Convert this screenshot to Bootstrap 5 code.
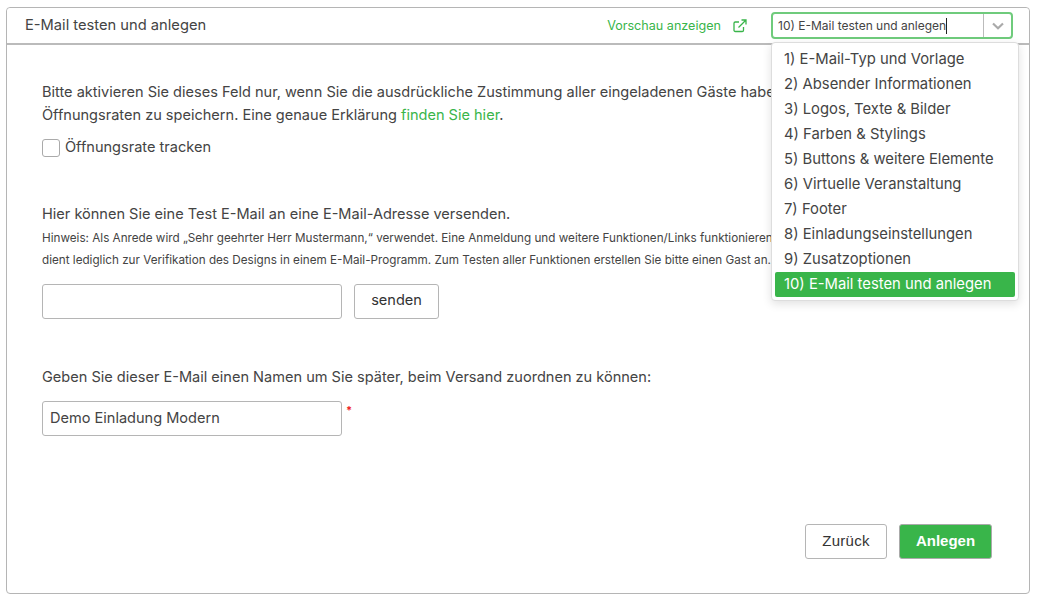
<!DOCTYPE html>
<html lang="de">
<head>
    <meta charset="UTF-8">
    <title>E-Mail testen und anlegen</title>
    <link href="https://cdn.jsdelivr.net/npm/bootstrap@5.3.0/dist/css/bootstrap.min.css" rel="stylesheet">
    <style>
        body { font-family: Inter, "Liberation Sans", sans-serif; font-size: 14.55px; color: #444; background: #fff; overflow: hidden; }
        .wiz-page { padding: 7px 9px 5px 6px; }
        .wiz-card { height: 587px; border: 1px solid #b5b5b5; border-radius: 4px; overflow: visible; }
        .wiz-head { height: 37px; padding: 0 16px 0 18px; background: #fff; border-bottom: 2px solid #bbb; border-radius: 4px 4px 0 0; }
        .wiz-title { font-size: 14.7px; color: #444; }
        .wiz-preview { color: #39b54a; font-size: 12.6px; text-decoration: none; margin-right: 24px; padding-top: 1px; }
        .wiz-preview svg { margin-left: 12px; }
        .wiz-select { width: 242px; height: 27px; border: 2px solid #6fcb7c; border-radius: 4px; font-size: 12px; }
        .wiz-value { padding-left: 5px; line-height: 22px; border-right: 1px solid #bbb; }
        .wiz-caret { width: 1px; height: 16px; background: #222; margin-left: 0; }
        .wiz-arrow { width: 27px; }
        .wiz-menu { position: absolute; top: 34px; left: 764px; width: 248px; height: 259px; padding: 4px 3px; background: #fff; border: 1px solid #ddd; border-radius: 4px; box-shadow: 0 3px 10px rgba(0,0,0,.12); z-index: 5; }
        .wiz-item { height: 25px; line-height: 25px; padding-left: 9px; font-size: 14.8px; color: #444; white-space: nowrap; border-radius: 2px; }
        .wiz-item.is-active { background: #39b54a; color: #fff; }
        .wiz-body { padding: 0 35px; }
        .wiz-text { line-height: 23px; margin: 0; white-space: nowrap; }
        .wiz-text a { color: #39b54a; text-decoration: none; }
        .wiz-hint { font-size: 11.7px; line-height: 22px; margin: 0; white-space: nowrap; }
        .wiz-first { margin-top: 1px; }
        .wiz-check { width: 18px; height: 18px; border: 1px solid #aaa; border-radius: 3px; background: #fff; }
        .wiz-check-row { gap: 5px; margin-top: 10px; }
        .wiz-input { width: 300px; height: 35px; font-size: 14.55px; color: #444; border-color: #b5b5b5; border-radius: 3px; padding: 0 7px; }
        .wiz-btn { width: 85px; height: 35px; padding: 0; font-size: 14.55px; color: #333; background: #fff; border: 1px solid #b5b5b5; border-radius: 3px; }
        .wiz-back { width: 82px; font-family: "Liberation Sans", Arial, sans-serif; font-size: 15px; letter-spacing: .3px; }
        .wiz-save { height: 35px; width: 93px; padding: 0; font-family: "Liberation Sans", Arial, sans-serif; font-size: 15px; font-weight: 700; color: #fff; background: #39b54a; border: 1px solid #aaa; border-radius: 3px; }
        .wiz-star { color: #e22; font-size: 11px; font-weight: 700; line-height: 1; margin: 4px 0 0 4px; }
        .wiz-s1 { padding-top: 36px; }
        .wiz-s2 { padding-top: 44px; }
        .wiz-s3 { padding-top: 47px; }
        .wiz-row { margin-top: 13px; gap: 12px; }
        .wiz-foot { padding: 0 37px 34px 0; gap: 12px; }
    </style>
</head>
<body>

<div class="wiz-page">
    <div class="card wiz-card position-relative">
        <div class="wiz-head d-flex align-items-center">
            <span class="wiz-title me-auto">E-Mail testen und anlegen</span>
            <a class="wiz-preview d-flex align-items-center" href="#">Vorschau anzeigen
                <svg width="14" height="14" viewBox="0 0 14 14" fill="none" stroke="#39b54a" stroke-width="1.3"><path d="M10.500 8v3.200c0 .8-.5 1.300-1.300 1.300H2.300c-.8 0-1.300-.5-1.300-1.300V4.300C1 3.500 1.500 3 2.300 3H6"/><path d="M5.500 8.500 12.500 1.500M8.500 1h4.500v4.500"/></svg>
            </a>
            <div class="wiz-select d-flex">
                <div class="wiz-value flex-grow-1 d-flex align-items-center">10) E-Mail testen und anlegen<span class="wiz-caret"></span></div>
                <div class="wiz-arrow d-flex align-items-center justify-content-center">
                    <svg width="12" height="8" viewBox="0 0 12 8" fill="none" stroke="#aaa" stroke-width="2.200"><path d="M1 1.500 6 6.200 11 1.500"/></svg>
                </div>
            </div>
        </div>

        <div class="wiz-menu">
            <div class="wiz-item">1) E-Mail-Typ und Vorlage</div>
            <div class="wiz-item">2) Absender Informationen</div>
            <div class="wiz-item">3) Logos, Texte &amp; Bilder</div>
            <div class="wiz-item">4) Farben &amp; Stylings</div>
            <div class="wiz-item">5) Buttons &amp; weitere Elemente</div>
            <div class="wiz-item">6) Virtuelle Veranstaltung</div>
            <div class="wiz-item">7) Footer</div>
            <div class="wiz-item">8) Einladungseinstellungen</div>
            <div class="wiz-item">9) Zusatzoptionen</div>
            <div class="wiz-item is-active">10) E-Mail testen und anlegen</div>
        </div>

        <div class="wiz-body flex-grow-1">
            <div class="wiz-s1">
                <p class="wiz-text">Bitte aktivieren Sie dieses Feld nur, wenn Sie die ausdrückliche Zustimmung aller eingeladenen Gäste haben, um die</p>
                <p class="wiz-text">Öffnungsraten zu speichern. Eine genaue Erklärung <a href="#">finden Sie hier</a>.</p>
                <div class="d-flex align-items-center wiz-check-row">
                    <span class="wiz-check"></span>
                    <span>Öffnungsrate tracken</span>
                </div>
            </div>
            <div class="wiz-s2">
                <p class="wiz-text">Hier können Sie eine Test E-Mail an eine E-Mail-Adresse versenden.</p>
                <p class="wiz-hint wiz-first">Hinweis: Als Anrede wird „Sehr geehrter Herr Mustermann,“ verwendet. Eine Anmeldung und weitere Funktionen/Links funktionieren in der Test E-Mail nicht. Sie</p>
                <p class="wiz-hint">dient lediglich zur Verifikation des Designs in einem E-Mail-Programm. Zum Testen aller Funktionen erstellen Sie bitte einen Gast an.</p>
                <div class="d-flex wiz-row">
                    <input class="form-control wiz-input" type="text">
                    <button class="btn wiz-btn" type="button">senden</button>
                </div>
            </div>
            <div class="wiz-s3">
                <p class="wiz-text">Geben Sie dieser E-Mail einen Namen um Sie später, beim Versand zuordnen zu können:</p>
                <div class="d-flex mt-2 pt-1">
                    <input class="form-control wiz-input" type="text" value="Demo Einladung Modern">
                    <span class="wiz-star">*</span>
                </div>
            </div>
        </div>

        <div class="wiz-foot d-flex justify-content-end">
            <button class="btn wiz-btn wiz-back" type="button">Zurück</button>
            <button class="btn wiz-save" type="button">Anlegen</button>
        </div>
    </div>
</div>

<script src="https://cdn.jsdelivr.net/npm/bootstrap@5.3.0/dist/js/bootstrap.bundle.min.js"></script>
</body>
</html>
